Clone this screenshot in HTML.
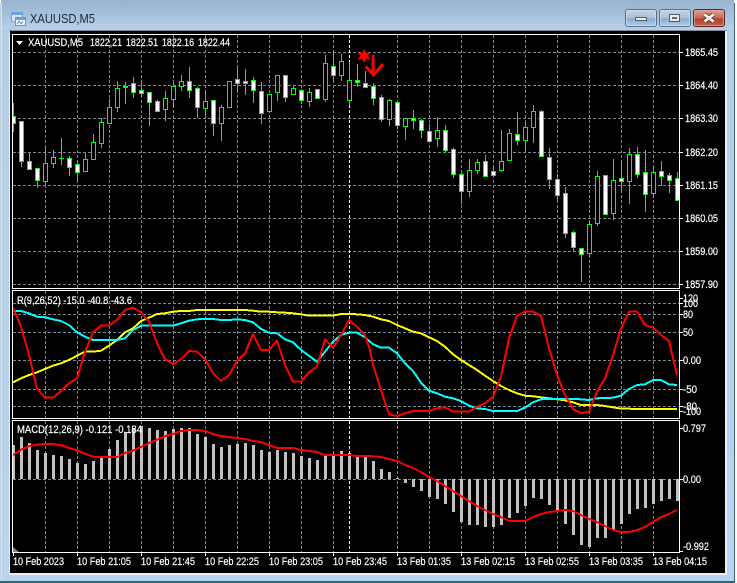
<!DOCTYPE html>
<html><head><meta charset="utf-8"><title>XAUUSD,M5</title>
<style>
html,body{margin:0;padding:0;width:737px;height:583px;overflow:hidden;background:#fff}
svg{display:block}
text{font-family:"Liberation Sans",sans-serif;font-size:11px;fill:#fff;stroke:#fff;stroke-width:.2px}
.c{shape-rendering:crispEdges}
</style></head><body>
<svg width="737" height="583" viewBox="0 0 737 583" xmlns="http://www.w3.org/2000/svg">
<defs>
<linearGradient id="fr" x1="0" y1="0" x2="0" y2="1"><stop offset="0" stop-color="#98b3cf"/><stop offset=".06" stop-color="#b5cee6"/><stop offset="1" stop-color="#b8d4ee"/></linearGradient>
<linearGradient id="tb" x1="0" y1="0" x2="0" y2="1"><stop offset="0" stop-color="#98b3cf"/><stop offset="1" stop-color="#b7d0e9"/></linearGradient>
<linearGradient id="bt" x1="0" y1="0" x2="0" y2="1"><stop offset="0" stop-color="#c3d5e7"/><stop offset=".5" stop-color="#a9c1da"/><stop offset=".55" stop-color="#8eaccb"/><stop offset="1" stop-color="#b4cde5"/></linearGradient>
<linearGradient id="cl" x1="0" y1="0" x2="0" y2="1"><stop offset="0" stop-color="#dfa294"/><stop offset=".5" stop-color="#c8685a"/><stop offset=".55" stop-color="#b13f2e"/><stop offset="1" stop-color="#c9614c"/></linearGradient>
<clipPath id="main"><rect x="13" y="35" width="666" height="253"/></clipPath>
<clipPath id="s1"><rect x="13" y="291" width="666" height="127"/></clipPath>
<clipPath id="s2"><rect x="13" y="421" width="666" height="131"/></clipPath>
</defs>

<!-- window frame -->
<path d="M3 0H730L734 3V582H0V3Z" fill="url(#fr)" class="c"/>
<rect x="1" y="0" width="733" height="30" fill="url(#tb)" class="c"/>
<rect x="0" y="3" width="1" height="580" fill="#c3d0dc" class="c"/>
<rect x="1" y="3" width="1" height="578" fill="#d5e2ee" class="c"/>
<rect x="734" y="3" width="1" height="580" fill="#3f6470" class="c"/>
<rect x="0" y="581" width="735" height="2" fill="#2f6a72" class="c"/>
<rect x="9" y="30" width="718" height="545" fill="#e8f1f8" class="c"/>
<rect x="9" y="30" width="718" height="1" fill="#7f8b96" class="c"/>
<rect x="10" y="31" width="715" height="542" fill="#000" class="c"/>

<!-- title icon -->
<g class="c">
<rect x="11.5" y="12.5" width="11" height="9" fill="#d7e6f6" stroke="#6fa3e0"/>
<rect x="12" y="13" width="10" height="2" fill="#6fa3e0"/>
<rect x="15.5" y="17.5" width="10" height="8" fill="#f3f8fd" stroke="#5f97da"/>
<rect x="16" y="18" width="9" height="2" fill="#6fa3e0"/>
<path d="M17 24l2-3 2 3 2-3" fill="none" stroke="#6fa3e0"/>
</g>
<text x="30" y="23" textLength="65" lengthAdjust="spacingAndGlyphs" style="font-size:12.5px;fill:#1d2b3a;stroke:none">XAUUSD,M5</text>

<!-- window buttons -->
<rect x="625.5" y="9.5" width="31" height="17" rx="2.5" fill="url(#bt)" stroke="#55708c"/>
<rect x="626.5" y="10.5" width="29" height="15" rx="1.5" fill="none" stroke="#d3e1ef" stroke-opacity=".7"/>
<rect x="635.5" y="17.5" width="11" height="3" fill="#ececec" stroke="#4e5f70" class="c"/>
<rect x="659.5" y="9.5" width="31" height="17" rx="2.5" fill="url(#bt)" stroke="#55708c"/>
<rect x="660.5" y="10.5" width="29" height="15" rx="1.5" fill="none" stroke="#d3e1ef" stroke-opacity=".7"/>
<rect x="669.5" y="14.5" width="10" height="7" fill="#ececec" stroke="#4e5f70" class="c"/>
<rect x="672" y="17" width="5" height="2" fill="#5b6b7c" class="c"/>
<rect x="693.5" y="9.5" width="31" height="17" rx="2.5" fill="url(#cl)" stroke="#5a2022"/>
<rect x="694.5" y="10.5" width="29" height="15" rx="1.5" fill="none" stroke="#e8b5aa" stroke-opacity=".6"/>
<path d="M704.5 14.5l9 7M713.5 14.5l-9 7" stroke="#5b2a26" stroke-width="4.5" fill="none"/>
<path d="M704.5 14.5l9 7M713.5 14.5l-9 7" stroke="#f4f4f4" stroke-width="2.8" fill="none"/>

<!-- grid -->
<g class="c" fill="none" stroke="#778899" stroke-dasharray="3 2">
<path d="M13 52.5H679M13 85.5H679M13 118.5H679M13 152.5H679M13 185.5H679M13 218.5H679M13 251.5H679M13 284.5H679"/>
<path d="M13 303.5H679M13 314.5H679M13 332.5H679M13 360.5H679M13 389.5H679M13 406.5H679"/>
<path d="M13 479.5H679"/>
<path d="M45.5 35V288M77.5 35V288M109.5 35V288M141.5 35V288M173.5 35V288M205.5 35V288M237.5 35V288M269.5 35V288M301.5 35V288M333.5 35V288M397.5 35V288M429.5 35V288M461.5 35V288M493.5 35V288M525.5 35V288M557.5 35V288M589.5 35V288M621.5 35V288M653.5 35V288"/>
<path d="M45.5 291V418M77.5 291V418M109.5 291V418M141.5 291V418M173.5 291V418M205.5 291V418M237.5 291V418M269.5 291V418M301.5 291V418M333.5 291V418M397.5 291V418M429.5 291V418M461.5 291V418M493.5 291V418M525.5 291V418M557.5 291V418M589.5 291V418M621.5 291V418M653.5 291V418"/>
<path d="M45.5 421V552M77.5 421V552M109.5 421V552M141.5 421V552M173.5 421V552M205.5 421V552M237.5 421V552M269.5 421V552M301.5 421V552M333.5 421V552M397.5 421V552M429.5 421V552M461.5 421V552M493.5 421V552M525.5 421V552M557.5 421V552M589.5 421V552M621.5 421V552M653.5 421V552"/>
<path stroke="#fff" d="M349.5 35V288M349.5 291V418M349.5 421V552"/>
</g>

<!-- candles -->
<g clip-path="url(#main)" class="c">
<path fill="none" stroke="#00ff00" d="M13.5 103V132M21.5 121V167M29.5 153V170M37.5 168V188M45.5 147V185M53.5 150V168M61.5 138V165M59 158.5h5M69.5 156V176M77.5 160V182M85.5 152V172M93.5 134V159M101.5 118V148M109.5 99V123M117.5 81V112M125.5 82V104M133.5 77V98M141.5 82V97M149.5 92V126M157.5 100V112M165.5 91V121M173.5 82V108M181.5 75V91M189.5 67V98M197.5 87V118M205.5 92V115M213.5 100V136M221.5 105V141M237.5 68V92M245.5 69V95M253.5 77V103M261.5 82V124M277.5 75V101M285.5 75V102M293.5 86V94M301.5 89V104M309.5 88V107M317.5 89V99M325.5 55V102M333.5 50V83M341.5 54V81M349.5 62V105M357.5 64V87M365.5 71V87M373.5 83V105M381.5 95V122M389.5 99V126M397.5 102V129M405.5 118V140M413.5 110V129M421.5 119V138M429.5 124V141M437.5 117V147M445.5 125V152M453.5 148V178M461.5 173V204M469.5 159V197M477.5 159V174M485.5 155V176M493.5 165V176M501.5 130V172M509.5 129V160M517.5 112V145M525.5 123V153M533.5 105V143M541.5 110V156M549.5 148V189M557.5 174V201M565.5 187V238M573.5 231V252M581.5 248V282M589.5 221V258M597.5 171V226M605.5 175V215M613.5 159V220M621.5 160V193M629.5 148V204M637.5 147V178M645.5 150V212M653.5 166V198M661.5 161V186M669.5 173V193M677.5 172V201"/>
<path fill="#000" stroke="#00ff00" d="M43.5 163.5h4v18h-4zM51.5 157.5h4v6h-4zM83.5 159.5h4v12h-4zM91.5 142.5h4v17h-4zM99.5 122.5h4v21h-4zM107.5 107.5h4v16h-4zM115.5 88.5h4v19h-4zM163.5 98.5h4v11h-4zM171.5 86.5h4v13h-4zM179.5 81.5h4v5h-4zM203.5 101.5h4v7h-4zM219.5 107.5h4v16h-4zM227.5 81.5h4v26h-4zM267.5 94.5h4v17h-4zM275.5 75.5h4v17h-4zM291.5 88.5h4v6h-4zM307.5 92.5h4v9h-4zM323.5 63.5h4v36h-4zM339.5 61.5h4v14h-4zM347.5 80.5h4v20h-4zM387.5 100.5h4v19h-4zM403.5 118.5h4v8h-4zM435.5 130.5h4v8h-4zM467.5 170.5h4v21h-4zM475.5 162.5h4v8h-4zM499.5 161.5h4v9h-4zM507.5 133.5h4v27h-4zM523.5 127.5h4v13h-4zM531.5 111.5h4v16h-4zM587.5 224.5h4v29h-4zM595.5 176.5h4v47h-4zM611.5 180.5h4v33h-4zM627.5 154.5h4v27h-4zM651.5 172.5h4v21h-4z"/>
<path fill="#fff" stroke="#00ff00" d="M11.5 116.5h4v7h-4zM19.5 121.5h4v40h-4zM27.5 161.5h4v8h-4zM35.5 168.5h4v12h-4zM67.5 158.5h4v9h-4zM75.5 164.5h4v8h-4zM123.5 86.5h4v1h-4zM131.5 83.5h4v9h-4zM139.5 90.5h4v3h-4zM147.5 92.5h4v10h-4zM155.5 101.5h4v10h-4zM187.5 81.5h4v9h-4zM195.5 88.5h4v19h-4zM211.5 100.5h4v23h-4zM235.5 79.5h4v4h-4zM243.5 81.5h4v2h-4zM251.5 80.5h4v10h-4zM259.5 91.5h4v22h-4zM283.5 75.5h4v22h-4zM299.5 90.5h4v10h-4zM315.5 89.5h4v9h-4zM331.5 66.5h4v9h-4zM355.5 80.5h4v2h-4zM363.5 83.5h4v4h-4zM371.5 86.5h4v12h-4zM379.5 97.5h4v22h-4zM395.5 102.5h4v23h-4zM411.5 118.5h4v2h-4zM419.5 120.5h4v10h-4zM427.5 131.5h4v10h-4zM443.5 130.5h4v20h-4zM451.5 149.5h4v25h-4zM459.5 174.5h4v17h-4zM483.5 161.5h4v15h-4zM491.5 171.5h4v4h-4zM515.5 134.5h4v6h-4zM539.5 111.5h4v45h-4zM547.5 157.5h4v22h-4zM555.5 179.5h4v16h-4zM563.5 193.5h4v40h-4zM571.5 232.5h4v15h-4zM579.5 248.5h4v6h-4zM603.5 175.5h4v39h-4zM619.5 178.5h4v3h-4zM635.5 154.5h4v20h-4zM643.5 172.5h4v22h-4zM659.5 171.5h4v5h-4zM667.5 175.5h4v5h-4zM675.5 178.5h4v22h-4z"/>
</g>

<!-- star and arrow objects -->
<path fill="#ff0000" d="M364 49l1.9 4 4.8-.8-3 3.5 3 3.9-4.8-.9-1.9 4.300-1.900-4.300-4.800.9 3-3.900-3-3.500 4.800.8z"/>
<path fill="none" stroke="#ff0000" stroke-width="3" d="M373 55V74M366 66.500L373.500 75L383 64"/>

<!-- oscillator lines -->
<g clip-path="url(#s1)" class="c" fill="none" stroke-width="2" stroke-linejoin="round">
<polyline stroke="#ffff00" points="13,382.3 21,378.3 29,375 37,372.3 45,369 53,365.7 61,363.3 69,360 77,355.7 85,351.7 93,351.7 101,350.7 109,345.7 117,340 125,332.3 133,328.3 141,321 149,317.7 157,314 165,313.3 173,311.7 181,311 189,311 197,310 245,310 253,310.7 261,311.7 269,311.7 277,312.3 285,312.7 293,313.3 301,314.3 309,315.7 333,315.7 341,314 349,314 357,314.3 365,315 373,316.7 381,319.3 389,321 397,325 405,328.3 413,331.7 421,333.3 429,337.3 437,341 445,346.7 453,354.3 461,360 469,365 477,370 485,375.7 493,381 501,386 509,390 517,393.3 525,395.7 533,396.3 541,397.3 549,398.3 557,399.3 565,400.3 573,402.3 581,405 597,405 605,406 613,407.3 621,408.7 629,408.7 637,409 677,409"/>
<polyline stroke="#00ffff" points="13,310.7 21,311 29,313.3 37,316.7 45,317.3 53,319.3 61,321 69,325 77,332.3 85,336.7 93,340 117,340 125,338.3 133,330 141,325.7 173,325.7 181,323.3 189,320.7 197,319.3 205,319 213,319 221,320 229,320 237,319.3 245,320 253,322.3 261,329 269,332.7 277,333.3 285,339.3 293,342.3 301,350 309,355.7 317,361.7 325,351.7 333,341.7 341,335 349,332.7 357,332.7 365,337.3 373,344.3 381,347.7 389,347.7 397,353.3 405,363.3 413,371 421,382.7 429,390.7 437,393.3 445,396.7 453,398.3 461,401 469,405.7 477,408.3 485,409 493,411 517,411 525,407.7 533,402.3 541,399.3 549,399 573,399 581,399.3 589,400 597,398.3 613,397.7 621,395.7 629,389 637,385 645,384.3 653,380 661,380 669,384.3 677,385"/>
<polyline stroke="#ff0000" points="13,307.7 21,326.7 29,355 37,388.3 45,397.7 53,397.7 61,391 69,383.3 77,378.3 85,351.7 93,332.3 101,325.7 109,325.7 117,320 125,310 133,307.7 141,312.3 149,321.7 157,343.3 165,359 173,364.3 181,359 189,351 197,351.7 205,359 213,373.3 221,381 229,375 237,361 245,353.3 253,334 261,350 269,350 277,340.7 285,365 293,381.7 301,381.7 309,372.3 317,366.7 325,339.3 333,347.7 341,335 349,320 357,326.7 365,335 370,350 373,365 381,390 389,414.3 397,416 405,413.3 413,411 429,411 437,408.3 445,407.3 453,411.7 469,411.7 477,406.7 485,403.3 493,396.7 501,376.7 509,338.3 517,315.7 525,311.7 533,311.7 541,315.7 549,348.3 557,375 565,395 573,409 581,413.3 589,411.7 597,391.7 605,378.3 613,355 621,328.3 629,311.7 637,311.7 645,325 653,327.7 661,335 669,341 677,375"/>
</g>

<!-- MACD -->
<g clip-path="url(#s2)">
<path class="c" fill="none" stroke="#c0c0c0" stroke-width="3" d="M13.5 445V479M21.5 437V479M29.5 443V479M37.5 450V479M45.5 453V479M53.5 455V479M61.5 456V479M69.5 459V479M77.5 463V479M85.5 464V479M93.5 461V479M101.5 457V479M109.5 449V479M117.5 440V479M125.5 432V479M133.5 428V479M141.5 426V479M149.5 428V479M157.5 430V479M165.5 431V479M173.5 429V479M181.5 428V479M189.5 428V479M197.5 434V479M205.5 437V479M213.5 444V479M221.5 447V479M229.5 445V479M237.5 444V479M245.5 443V479M253.5 445V479M261.5 450V479M269.5 452V479M277.5 450V479M285.5 452V479M293.5 453V479M301.5 456V479M309.5 458V479M317.5 460V479M325.5 455V479M333.5 454V479M341.5 451V479M349.5 453V479M357.5 455V479M365.5 456V479M373.5 461V479M381.5 469V479M389.5 472V479M397.5 478V479M405.5 479V483M413.5 479V487M421.5 479V491M429.5 479V497M437.5 479V499M445.5 479V504M453.5 479V512M461.5 479V522M469.5 479V525M477.5 479V525M485.5 479V527M493.5 479V527M501.5 479V525M509.5 479V518M517.5 479V513M525.5 479V506M533.5 479V498M541.5 479V499M549.5 479V505M557.5 479V510M565.5 479V524M573.5 479V535M581.5 479V545M589.5 479V547M597.5 479V538M605.5 479V538M613.5 479V530M621.5 479V524M629.5 479V514M637.5 479V509M645.5 479V508M653.5 479V504M661.5 479V501M669.5 479V499M677.5 479V501"/>
<polyline class="c" fill="none" stroke="#ff0000" stroke-width="2" stroke-linejoin="round" points="13,455.3 21,449.7 29,446.3 37,444.7 45,444 53,444 61,445.3 69,448 77,450.3 85,453.7 93,456.7 101,457 117,457 125,453 133,450.7 141,447 149,443 157,439.7 165,436.3 173,434 181,431 189,430 197,430 205,431 213,434 221,436 229,437 237,438 245,439 253,441 261,442 269,445 277,448 285,448 293,448 301,450 309,451 317,452 325,455 349,455 357,456 365,456 373,456.3 381,457 389,459 397,461 405,465 413,468 421,472 429,477 437,481 445,486 453,491 461,496 469,501 477,506 485,510 493,514 501,517 509,521 525,521 533,517 541,514 549,512 557,511 565,510 573,511 581,515 589,519 597,522 605,526 613,530 621,532 629,532 637,530 645,527 653,522 661,517 669,514 677,510"/>
</g>

<!-- panel borders and ticks -->
<g class="c" fill="none" stroke="#fff">
<rect x="12.5" y="34.5" width="667" height="254"/>
<rect x="12.5" y="290.5" width="667" height="128"/>
<path d="M12.5 420.5H679.5V552.5H12.5Z"/>
<path d="M680 52.5h3M680 85.5h3M680 118.5h3M680 152.5h3M680 185.5h3M680 218.5h3M680 251.5h3M680 284.5h3M680 298.5h3M680 303.5h3M680 314.5h3M680 332.5h3M680 360.5h3M680 389.5h3M680 406.5h3M680 411.5h3M680 428.5h3M680 479.5h3M680 551.5h3"/>
<path d="M13.5 553v3M77.5 553v3M141.5 553v3M205.5 553v3M269.5 553v3M333.5 553v3M397.5 553v3M461.5 553v3M525.5 553v3M589.5 553v3M653.5 553v3"/>
</g>
<path d="M13 547V552H19Z" fill="#778899"/>
<path d="M16 41H23L19.5 45Z" fill="#fff"/>

<!-- header labels -->
<text x="28" y="46" textLength="55" lengthAdjust="spacingAndGlyphs">XAUUSD,M5</text>
<text x="90" y="46" textLength="32" lengthAdjust="spacingAndGlyphs">1822,21</text>
<text x="126" y="46" textLength="32" lengthAdjust="spacingAndGlyphs">1822.51</text>
<text x="162" y="46" textLength="32" lengthAdjust="spacingAndGlyphs">1822.16</text>
<text x="198" y="46" textLength="32" lengthAdjust="spacingAndGlyphs">1822.44</text>
<text x="17" y="304" textLength="115" lengthAdjust="spacingAndGlyphs">R(9,26,52) -15.0 -40.8 -43.6</text>
<text x="17" y="433" textLength="125" lengthAdjust="spacingAndGlyphs">MACD(12,26,9) -0.121 -0.184</text>

<!-- right axis -->
<text x="685" y="56" textLength="33" lengthAdjust="spacingAndGlyphs">1865.45</text>
<text x="685" y="89" textLength="33" lengthAdjust="spacingAndGlyphs">1864.40</text>
<text x="685" y="122" textLength="33" lengthAdjust="spacingAndGlyphs">1863.30</text>
<text x="685" y="156" textLength="33" lengthAdjust="spacingAndGlyphs">1862.20</text>
<text x="685" y="189" textLength="33" lengthAdjust="spacingAndGlyphs">1861.15</text>
<text x="685" y="222" textLength="33" lengthAdjust="spacingAndGlyphs">1860.05</text>
<text x="685" y="255" textLength="33" lengthAdjust="spacingAndGlyphs">1859.00</text>
<text x="685" y="288" textLength="33" lengthAdjust="spacingAndGlyphs">1857.90</text>
<text x="683" y="302" textLength="15" lengthAdjust="spacingAndGlyphs">120</text>
<text x="683" y="307" textLength="15" lengthAdjust="spacingAndGlyphs">100</text>
<text x="683" y="318" textLength="10" lengthAdjust="spacingAndGlyphs">80</text>
<text x="683" y="336" textLength="10" lengthAdjust="spacingAndGlyphs">50</text>
<text x="683" y="364" textLength="18" lengthAdjust="spacingAndGlyphs">0.00</text>
<text x="683" y="393" textLength="14" lengthAdjust="spacingAndGlyphs">-50</text>
<text x="683" y="410" textLength="14" lengthAdjust="spacingAndGlyphs">-80</text>
<text x="683" y="415" textLength="18" lengthAdjust="spacingAndGlyphs">-100</text>
<text x="683" y="432" textLength="23" lengthAdjust="spacingAndGlyphs">0.797</text>
<text x="683" y="483" textLength="18" lengthAdjust="spacingAndGlyphs">0.00</text>
<text x="683" y="550" textLength="26" lengthAdjust="spacingAndGlyphs">-0.992</text>

<!-- time axis -->
<text x="13" y="565" textLength="51" lengthAdjust="spacingAndGlyphs">10 Feb 2023</text>
<text x="77" y="565" textLength="54" lengthAdjust="spacingAndGlyphs">10 Feb 21:05</text>
<text x="141" y="565" textLength="54" lengthAdjust="spacingAndGlyphs">10 Feb 21:45</text>
<text x="205" y="565" textLength="54" lengthAdjust="spacingAndGlyphs">10 Feb 22:25</text>
<text x="269" y="565" textLength="54" lengthAdjust="spacingAndGlyphs">10 Feb 23:05</text>
<text x="333" y="565" textLength="54" lengthAdjust="spacingAndGlyphs">10 Feb 23:45</text>
<text x="397" y="565" textLength="54" lengthAdjust="spacingAndGlyphs">13 Feb 01:35</text>
<text x="461" y="565" textLength="54" lengthAdjust="spacingAndGlyphs">13 Feb 02:15</text>
<text x="525" y="565" textLength="54" lengthAdjust="spacingAndGlyphs">13 Feb 02:55</text>
<text x="589" y="565" textLength="54" lengthAdjust="spacingAndGlyphs">13 Feb 03:35</text>
<text x="653" y="565" textLength="54" lengthAdjust="spacingAndGlyphs">13 Feb 04:15</text>
</svg>
</body></html>
